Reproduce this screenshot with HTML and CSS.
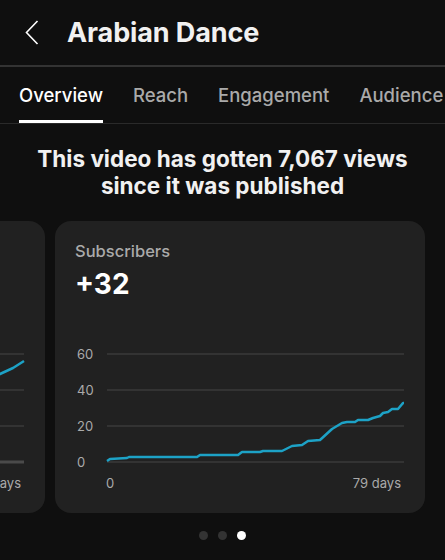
FILE: index.html
```html
<!DOCTYPE html>
<html lang="en">
<head>
    <meta charset="UTF-8">
    <meta name="viewport" content="width=device-width, initial-scale=1.0">
    <title>Arabian Dance - Analytics</title>
    <link rel="stylesheet" href="styles.css">
</head>
<body>
    <header class="header">
        <button class="back" aria-label="Back">
            <svg width="14" height="25" viewBox="0 0 14 25">
                <polyline points="12.5,1 1.5,12.5 12.5,24" fill="none" stroke="#fff" stroke-width="1.6"/>
            </svg>
        </button>
        <h1 class="title">Arabian Dance</h1>
    </header>

    <nav class="tabs">
        <a class="tab active">Overview</a>
        <a class="tab">Reach</a>
        <a class="tab">Engagement</a>
        <a class="tab">Audience</a>
    </nav>

    <p class="headline">This video has gotten 7,067 views since it was published</p>

    <div class="carousel">
        <div class="track">
            <div class="card">
                <div class="card-label">Watch time (hours)</div>
                <div class="card-value">318.4</div>
                <svg class="chart" width="350" height="155" viewBox="0 0 350 155">
                    <line class="grid" x1="32" y1="14" x2="329" y2="14"/>
                    <line class="grid" x1="32" y1="50" x2="329" y2="50"/>
                    <line class="grid" x1="32" y1="86" x2="329" y2="86"/>
                    <line class="grid base" x1="32" y1="122" x2="329" y2="122"/>
                    <text class="axis" x="2" y="18.5">400</text>
                    <text class="axis" x="2" y="54.5">300</text>
                    <text class="axis" x="2" y="90.5">200</text>
                    <text class="axis" x="2" y="126.5">0</text>
                    <text class="axis" x="31" y="148">0</text>
                    <text class="axis" x="326" y="148" text-anchor="end">79 days</text>
                    <polyline class="line" points="32,121 70,108 110,95 150,84 190,74 230,64 260,56 285,46 305,34 318,28 329,21"/>
                </svg>
            </div>
            <div class="card">
                <div class="card-label">Subscribers</div>
                <div class="card-value">+32</div>
                <svg class="chart" width="350" height="155" viewBox="0 0 350 155">
                    <line class="grid" x1="32" y1="14" x2="329" y2="14"/>
                    <line class="grid" x1="32" y1="50" x2="329" y2="50"/>
                    <line class="grid" x1="32" y1="86" x2="329" y2="86"/>
                    <line class="grid" x1="32" y1="122" x2="329" y2="122"/>
                    <text class="axis" x="2" y="18.5">60</text>
                    <text class="axis" x="2" y="54.5">40</text>
                    <text class="axis" x="2" y="90.5">20</text>
                    <text class="axis" x="2" y="126.5">0</text>
                    <text class="axis" x="31" y="148">0</text>
                    <text class="axis" x="326" y="148" text-anchor="end">79 days</text>
                    <polyline class="line" points="32,121 35,119 52,118 54,117 122,117 125,115 163,115 167,112 185,112 188,111 207,111 217,106 227,105 233,101 245,100 257,89 267,83 272,82 280,82 283,80 293,80 298,78 305,76 308,73 313,72 317,69 323,69 328,63 329,63"/>
                </svg>
            </div>
        </div>
    </div>

    <div class="dots">
        <span class="dot"></span>
        <span class="dot"></span>
        <span class="dot active"></span>
    </div>
</body>
</html>
```

FILE: styles.css
```css
body {
    margin: 0;
    background: #0f0f0f;
    color: #f1f1f1;
    font-family: Inter, "Noto Sans", sans-serif;
    width: 445px;
    overflow: hidden;
}
.header {
    height: 65px;
    display: flex;
    align-items: center;
    border-bottom: 2px solid #333;
}
.back {
    background: none;
    border: 0;
    padding: 0;
    margin-left: 25px;
    display: flex;
}
.title {
    margin: 0 0 0 28px;
    font-size: 27px;
    font-weight: 700;
    letter-spacing: -0.1px;
}
.tabs {
    height: 56px;
    display: flex;
    gap: 30px;
    padding-left: 19px;
    border-bottom: 1px solid #2a2a2a;
    white-space: nowrap;
}
.tab {
    display: flex;
    align-items: center;
    padding-top: 2px;
    font-size: 18.5px;
    font-weight: 500;
    color: #aaa;
    border-bottom: 3px solid transparent;
}
.tab.active {
    color: #fff;
    border-bottom-color: #fff;
}
.headline {
    margin: 22px 20px 0;
    text-align: center;
    font-size: 22.5px;
    line-height: 26.5px;
    font-weight: 700;
}
.carousel {
    margin-top: 22px;
    overflow: hidden;
}
.track {
    display: flex;
    gap: 10px;
    margin-left: -325px;
}
.card {
    flex: 0 0 370px;
    height: 292px;
    box-sizing: border-box;
    padding: 20px 0 0 20px;
    background: #212121;
    border-radius: 16px;
}
.card-label {
    font-size: 16.5px;
    line-height: 20px;
    font-weight: 500;
    color: #aaa;
}
.card-value {
    margin-top: 6px;
    font-size: 28px;
    line-height: 34px;
    font-weight: 700;
    color: #fff;
}
.chart {
    display: block;
    margin-top: 39px;
}
.grid {
    stroke: #3a3a3a;
    stroke-width: 1.5;
}
.grid.base {
    stroke: #4a4a4a;
    stroke-width: 3;
}
.axis {
    fill: #aaa;
    font-family: Inter, "Noto Sans", sans-serif;
    font-size: 13px;
}
.line {
    fill: none;
    stroke: #1da2c6;
    stroke-width: 2.5;
    stroke-linejoin: round;
}
.dots {
    display: flex;
    justify-content: center;
    gap: 10px;
    margin-top: 18px;
}
.dot {
    width: 9px;
    height: 9px;
    border-radius: 50%;
    background: #333;
}
.dot.active {
    background: #fff;
}
```
